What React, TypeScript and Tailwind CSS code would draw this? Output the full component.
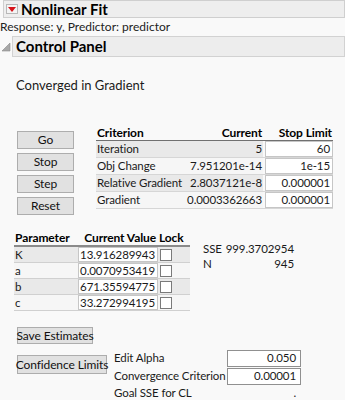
import React from "react";

const critRows = [
  { name: "Iteration", cur: "5", lim: "60" },
  { name: "Obj Change", cur: "7.951201e-14", lim: "1e-15" },
  { name: "Relative Gradient", cur: "2.8037121e-8", lim: "0.000001" },
  { name: "Gradient", cur: "0.0003362663", lim: "0.000001" },
];

const params = [
  { name: "K", val: "13.916289943" },
  { name: "a", val: "0.0070953419" },
  { name: "b", val: "671.35594775" },
  { name: "c", val: "33.272994195" },
];

function Btn({ children, className = "" }: { children: React.ReactNode; className?: string }) {
  return (
    <div
      className={
        "flex items-center justify-center whitespace-nowrap border border-[#adadad] bg-[#e1e1e1] text-[12px] tracking-[-0.1px] text-[#111] leading-none " +
        className
      }
    >
      {children}
    </div>
  );
}

export default function App() {
  return (
    <div className="w-[345px] h-[400px] overflow-hidden bg-[#f9f9f9] font-['Lato',sans-serif] text-[#1a1a1a] whitespace-nowrap">
      {/* Header */}
      <div className="ml-[3px] h-[18px] border border-[#cfcfcf] bg-[#eeeeee] flex items-center">
        <div className="ml-[2px] w-[12px] h-[10px] border border-[#b8b8b8] bg-[#f4f4f4] flex items-center justify-center">
          <svg width="8" height="5" viewBox="0 0 8 5">
            <polygon points="0,0 8,0 4,5" fill="#d7141a" />
          </svg>
        </div>
        <span className="ml-[3px] text-[15px] font-bold leading-none text-black">Nonlinear Fit</span>
      </div>
      <div className="h-[18px] flex items-center text-[12px] leading-none text-[#222]">Response: y, Predictor: predictor</div>
      {/* Control Panel */}
      <div className="flex items-center h-[21px]">
        <svg width="12" height="12" viewBox="0 0 12 12" className="shrink-0">
          <polygon points="10,2 10,10 2,10" fill="#a8a8a8" stroke="#8a8a8a" strokeWidth="0.6" />
        </svg>
        <div className="flex-1 h-[21px] border border-[#d2d2d2] bg-[#ededed] flex items-center">
          <span className="ml-[3px] text-[15px] font-bold leading-none text-black">Control Panel</span>
        </div>
      </div>
      <div className="pl-[16px] mt-[21px] h-[14px] text-[13px] leading-none flex items-center">Converged in Gradient</div>

      {/* Buttons + criterion */}
      <div className="flex mt-[35px]">
        <div className="ml-[17px] w-[57px] flex flex-col gap-[4px] mt-[4px]">
          <Btn className="h-[18px]">Go</Btn>
          <Btn className="h-[18px]">Stop</Btn>
          <Btn className="h-[18px]">Step</Btn>
          <Btn className="h-[18px]">Reset</Btn>
        </div>
        <div className="ml-[22px] text-[11.5px] tracking-[-0.1px] leading-none">
          <div className="flex h-[14px] items-end border-b border-[#707070] font-bold text-black pb-[1px] text-[12px]">
            <div className="w-[87px] pl-[1px]">Criterion</div>
            <div className="w-[80px] text-right pr-[1px]">Current</div>
            <div className="w-[70px] text-right pr-[1px]">Stop Limit</div>
          </div>
          {critRows.map((r, i) => (
            <div key={r.name} className="flex h-[17px] border-b border-[#d6d6d6]">
              <div className={"w-[87px] pl-[1px] flex items-center overflow-hidden " + (i % 2 === 0 ? "bg-[#e9e9e9]" : "bg-[#f6f6f6]")}>{r.name}</div>
              <div className={"w-[80px] pr-[1px] flex items-center justify-end " + (i % 2 === 0 ? "bg-[#e9e9e9]" : "bg-[#f6f6f6]")}>{r.cur}</div>
              <div className="w-[70px] pl-[2px]">
                <div className="h-full border border-[#c6c6c6] bg-white flex items-center justify-end pr-[2px]">{r.lim}</div>
              </div>
            </div>
          ))}
        </div>
      </div>

      {/* Parameters */}
      <div className="flex mt-[18px] text-[11.5px] tracking-[-0.1px] leading-none">
        <div className="ml-[14px]">
          <div className="flex h-[14px] items-end border-b-2 border-[#8a8a8a] font-bold text-black pb-[1px] text-[12px]">
            <div className="w-[63px] pl-[1px]">Parameter</div>
            <div className="w-[81px] text-right pr-[2px]">Current Value</div>
            <div className="w-[32px] pl-[1px]">Lock</div>
          </div>
          {params.map((p, i) => (
            <div key={p.name} className={"flex h-[16px] border-b border-[#d0d0d0] " + (i % 2 === 0 ? "bg-[#e9e9e9]" : "bg-[#f6f6f6]")}>
              <div className="w-[63px] pl-[1px] flex items-center">{p.name}</div>
              <div className="w-[81px] pl-[1px]">
                <div className="h-full border border-[#c6c6c6] bg-white flex items-center justify-end pr-[2px]">{p.val}</div>
              </div>
              <div className="w-[32px] flex items-center pl-[2px]">
                <div className="w-[12px] h-[12px] border border-[#7a7a7a] bg-white" />
              </div>
            </div>
          ))}
        </div>
        <div className="ml-[13px] mt-[8px] w-[91px]">
          <div className="flex h-[15px] items-center">
            <span className="w-[28px]">SSE</span>
            <span className="flex-1 text-right">999.3702954</span>
          </div>
          <div className="flex h-[15px] items-center">
            <span className="w-[28px]">N</span>
            <span className="flex-1 text-right">945</span>
          </div>
        </div>
      </div>

      <Btn className="ml-[17px] mt-[16px] w-[76px] h-[17px]">Save Estimates</Btn>

      <div className="flex mt-[5px] text-[11.5px] tracking-[-0.1px] leading-none">
        <Btn className="ml-[17px] mt-[6px] w-[90px] h-[19px]">Confidence Limits</Btn>
        <div className="ml-[7px] flex flex-col">
          <div className="flex h-[18px] items-center">
            <span className="w-[113px]">Edit Alpha</span>
            <div className="w-[74px] h-[17px] border border-[#909090] bg-white flex items-center justify-end pr-[4px]">0.050</div>
          </div>
          <div className="flex h-[18px] items-center">
            <span className="w-[113px]">Convergence Criterion</span>
            <div className="w-[74px] h-[17px] border border-[#909090] bg-white flex items-center justify-end pr-[4px]">0.00001</div>
          </div>
          <div className="flex h-[15px] items-center">
            <span className="w-[113px]">Goal SSE for CL</span>
            <span className="w-[74px] text-right pr-[5px]">.</span>
          </div>
        </div>
      </div>
    </div>
  );
}
